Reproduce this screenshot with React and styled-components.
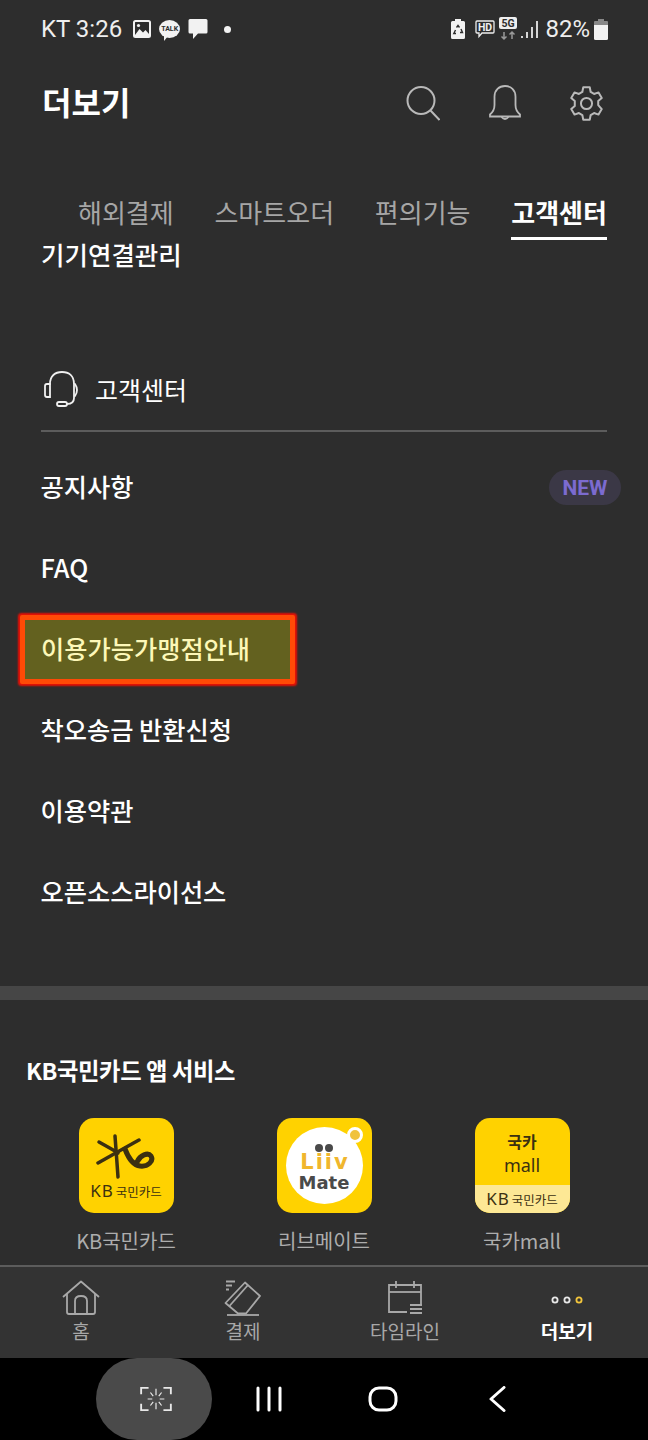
import React from "react";
import styled, { createGlobalStyle } from "styled-components";

const tabs = [
  { label: "해외결제" },
  { label: "스마트오더" },
  { label: "편의기능" },
  { label: "고객센터", active: true },
];

const rows = [
  { label: "공지사항", isNew: true },
  { label: "FAQ" },
  { label: "이용가능가맹점안내", marked: true },
  { label: "착오송금 반환신청" },
  { label: "이용약관" },
  { label: "오픈소스라이선스" },
];

export default function App() {
  return (
    <>
      <GlobalStyle />
      <Page>
        <StatusBar>
          <StatusLeft>
            <ClockText>KT 3:26</ClockText>
            <PictureIcon />
            <TalkBubble>TALK</TalkBubble>
            <MessageIcon />
            <Dot />
          </StatusLeft>
          <StatusRight>
            <BatterySaverIcon />
            <HdIcon />
            <FiveGIcon />
            <SignalIcon />
            <PercentText>82%</PercentText>
            <BatteryIcon />
          </StatusRight>
        </StatusBar>

        <Header>
          <Title>더보기</Title>
          <HeaderIcons>
            <SearchIcon />
            <BellIcon />
            <GearIcon />
          </HeaderIcons>
        </Header>

        <Tabs>
          {tabs.map((tab) => (
            <Tab key={tab.label} $active={tab.active}>
              {tab.label}
            </Tab>
          ))}
        </Tabs>

        <DeviceLabel>기기연결관리</DeviceLabel>

        <SectionHead>
          <HeadsetIcon />
          <SectionTitle>고객센터</SectionTitle>
        </SectionHead>

        <List>
          {rows.map((row) => (
            <Row key={row.label}>
              <RowLabel $marked={row.marked}>{row.label}</RowLabel>
              {row.isNew && <NewBadge>NEW</NewBadge>}
            </Row>
          ))}
        </List>

        <Band />

        <Apps>
          <AppsTitle>KB국민카드 앱 서비스</AppsTitle>
          <AppGrid>
            <AppItem>
              <AppIcon>
                <KbMark />
                <KbLine>
                  KB<small>국민카드</small>
                </KbLine>
              </AppIcon>
              <AppName>KB국민카드</AppName>
            </AppItem>
            <AppItem>
              <AppIcon>
                <LiivCircle>
                  <LiivDots>
                    <i />
                    <i />
                  </LiivDots>
                  <LiivWord>Liiv</LiivWord>
                  <MateWord>Mate</MateWord>
                </LiivCircle>
                <LiivRing />
              </AppIcon>
              <AppName>리브메이트</AppName>
            </AppItem>
            <AppItem>
              <AppIcon>
                <MallTop>
                  <b>국카</b>
                  <span>mall</span>
                </MallTop>
                <MallBand>
                  KB<small>국민카드</small>
                </MallBand>
              </AppIcon>
              <AppName>국카mall</AppName>
            </AppItem>
          </AppGrid>
        </Apps>

        <BottomNav>
          <NavItem>
            <HomeIcon />
            <span>홈</span>
          </NavItem>
          <NavItem>
            <PayIcon />
            <span>결제</span>
          </NavItem>
          <NavItem>
            <CalendarIcon />
            <span>타임라인</span>
          </NavItem>
          <NavItem $active>
            <MoreIcon />
            <span>더보기</span>
          </NavItem>
        </BottomNav>

        <SystemBar>
          <ScanPill>
            <ScanIcon />
          </ScanPill>
          <RecentsIcon />
          <HomeKeyIcon />
          <BackIcon />
        </SystemBar>
      </Page>
    </>
  );
}

const PictureIcon = () => (
  <svg width="18" height="18" viewBox="0 0 18 18">
    <rect x="1" y="1" width="16" height="16" rx="1.5" fill="none" stroke="#f2f2f2" strokeWidth="2" />
    <path d="M2 15 L6.500 9 L10 12.500 L12.500 10 L16 14 V16 H2 Z" fill="#f2f2f2" />
    <circle cx="5.500" cy="5.500" r="1.600" fill="#f2f2f2" />
  </svg>
);

const MessageIcon = () => (
  <svg width="20" height="22" viewBox="0 0 20 22">
    <path d="M2 1 H18 Q19.500 1 19.500 2.500 V14 Q19.500 15.500 18 15.500 H10 L5 21 V15.500 H2 Q0.500 15.500 0.500 14 V2.500 Q0.500 1 2 1 Z" fill="#f2f2f2" />
  </svg>
);

const BatterySaverIcon = () => (
  <svg width="14" height="20" viewBox="0 0 14 20">
    <path d="M4 0 H10 V2 H12.500 Q14 2 14 3.500 V18.500 Q14 20 12.500 20 H1.500 Q0 20 0 18.500 V3.500 Q0 2 1.500 2 H4 Z" fill="#f2f2f2" />
    <path d="M5.500 8.500 L7 6.500 L8.500 8.500 M10 10 L11.500 13.500 H9 M5 14.500 H2.800 L4.500 11" fill="none" stroke="#2d2d2d" strokeWidth="1.400" />
  </svg>
);

const HdIcon = () => (
  <svg width="20" height="20" viewBox="0 0 20 20">
    <path d="M2 2 H18 Q19 2 19 3 V13 Q19 14 18 14 H7 L4 17.500 V14 H2 Q1 14 1 13 V3 Q1 2 2 2 Z" fill="none" stroke="#eee" strokeWidth="1.300" />
    <text x="10" y="12" textAnchor="middle" fontSize="10.500" fontWeight="700" fontFamily="Roboto, sans-serif" fill="#eee">HD</text>
  </svg>
);

const FiveGIcon = () => (
  <svg width="18" height="24" viewBox="0 0 18 24">
    <rect x="0" y="0" width="18" height="12" rx="2" fill="#eee" />
    <text x="9" y="10" textAnchor="middle" fontSize="10.500" fontWeight="700" fontFamily="Roboto, sans-serif" fill="#2d2d2d">5G</text>
    <path d="M5 15 V22 M2.500 19.500 L5 22 L7.500 19.500" fill="none" stroke="#999" strokeWidth="1.500" />
    <path d="M13 22 V15 M10.500 17.500 L13 15 L15.500 17.500" fill="none" stroke="#999" strokeWidth="1.500" />
  </svg>
);

const SignalIcon = () => (
  <svg width="17" height="20" viewBox="0 0 17 20">
    <path d="M1 17 V19 M6 13 V19 M11 8 V19 M16 2 V19" stroke="#e8e8e8" strokeWidth="1.800" fill="none" />
  </svg>
);

const BatteryIcon = () => (
  <svg width="14" height="21" viewBox="0 0 14 21">
    <rect x="4" y="0" width="6" height="3" fill="#888" />
    <rect x="0" y="2" width="14" height="5" rx="1" fill="#888" />
    <path d="M0 6 H14 V19.500 Q14 21 12.500 21 H1.500 Q0 21 0 19.500 Z" fill="#f2f2f2" />
  </svg>
);

const SearchIcon = () => (
  <svg width="34" height="36" viewBox="0 0 34 36" fill="none" stroke="#b9b9b9" strokeWidth="2">
    <circle cx="15" cy="15.500" r="13.500" />
    <path d="M24.500 25.500 L33.500 35" />
  </svg>
);

const BellIcon = () => (
  <svg width="34" height="36" viewBox="0 0 34 36" fill="none" stroke="#b9b9b9" strokeWidth="1.800">
    <path d="M2 29.500 C5 27 6.500 25 6.500 20 V11.500 C6.500 5 11 1 17 1 C23 1 27.500 5 27.500 11.500 V20 C27.500 25 29 27 32 29.500 V31.500 H2 Z" />
    <path d="M13.500 32 Q17 36 20.500 32" />
  </svg>
);

const GearIcon = () => (
  <svg width="37" height="37" viewBox="0 0 24 24" fill="none" stroke="#b9b9b9" strokeWidth="1.300" strokeLinejoin="round">
    <path d="M9.900 1.500 H14.100 L14.700 4.500 L16.900 5.800 L19.800 4.800 L21.900 8.400 L19.600 10.400 V13 L21.900 15.600 L19.800 19.200 L16.900 18.200 L14.700 19.500 L14.100 22.500 H9.900 L9.300 19.500 L7.100 18.200 L4.200 19.200 L2.100 15.600 L4.400 13.600 V10.400 L2.100 8.400 L4.200 4.800 L7.100 5.800 L9.300 4.500 Z" />
    <circle cx="12" cy="12" r="3.600" />
  </svg>
);

const HeadsetIcon = () => (
  <svg width="36" height="36" viewBox="0 0 36 36" fill="none" stroke="#f0f0f0" strokeWidth="1.800" strokeLinecap="round">
    <path d="M6 13 C6 5 11 1 18 1 C25 1 30 5 30 13 V27 C30 31 27 33 23 33" />
    <path d="M6 13 V26 H3 Q1 26 1 24 V15 Q1 13 3 13 H6" />
    <path d="M31 13 Q35 19 31 25" />
    <rect x="13" y="31" width="10" height="4" rx="2" />
  </svg>
);

const KbSvg = styled.svg`
  margin-top: 5px;
`;

const KbMark = () => (
  <KbSvg width="60" height="46" viewBox="0 0 60 46" fill="none" stroke="#3b3011" strokeWidth="3.500" strokeLinecap="round">
    <path d="M19 2 C20 14 21 30 22 43" />
    <path d="M3 8 C10 12 16 15 22 19" />
    <path d="M2 29 C18 20 32 12 43 6" />
    <path d="M29 15 C32 23 36 31 44 32 C52 33 58 27 55 22 C52 18 44 21 41 28" strokeWidth="5" />
  </KbSvg>
);

const HomeIcon = () => (
  <svg width="38" height="36" viewBox="0 0 38 36" fill="none" stroke="#a8a8a8" strokeWidth="1.800" strokeLinejoin="round">
    <path d="M1 17 L19 1.500 L37 17" />
    <path d="M5 14 V32 Q5 34 7 34 H31 Q33 34 33 32 V14" />
    <path d="M13 34 V21 Q13 16 19 16 Q25 16 25 21 V34" />
  </svg>
);

const PayIcon = () => (
  <svg width="38" height="36" viewBox="0 0 38 36" fill="none" stroke="#a8a8a8" strokeWidth="1.800" strokeLinejoin="round">
    <path d="M2 1.500 H11 M2 5.500 H8 M2 9.500 H5" />
    <path d="M21 2.500 L36 16 L22 33.500 H14 L1.500 23 Z" />
    <path d="M5 26.500 L24 5" />
    <path d="M3 35 H35" />
  </svg>
);

const CalendarIcon = () => (
  <svg width="36" height="36" viewBox="0 0 36 36" fill="none" stroke="#a8a8a8" strokeWidth="1.800">
    <path d="M20 32 H2 V5 H34 V25" />
    <path d="M2 12 H34" />
    <path d="M9 1 V8 M27 1 V8" />
    <path d="M23 25 H35 M23 29 H35 M23 33 H35" />
  </svg>
);

const MoreIcon = () => (
  <svg width="36" height="36" viewBox="0 0 36 36" fill="none" strokeWidth="1.800">
    <circle cx="6" cy="20" r="2.600" stroke="#e8e8e8" />
    <circle cx="18" cy="20" r="2.600" stroke="#e8e8e8" />
    <circle cx="30" cy="20" r="2.600" stroke="#f2c53c" />
  </svg>
);

const ScanIcon = () => (
  <svg width="32" height="26" viewBox="0 0 34 28" fill="none" stroke="#e8e8e8" strokeWidth="2">
    <path d="M9 2 H1 V9 M25 2 H33 V9 M9 26 H1 V19 M25 26 H33 V19" />
    <path d="M17 3 V10 M17 18 V25 M8 14 H13 M21 14 H26 M11 7 L14 11 M23 7 L20 11 M11 21 L14 17 M23 21 L20 17" strokeWidth="1.300" />
  </svg>
);

const RecentsIcon = () => (
  <svg width="30" height="26" viewBox="0 0 30 26" fill="none" stroke="#fff" strokeWidth="3" strokeLinecap="round">
    <path d="M4 2 V24 M15 2 V24 M26 2 V24" />
  </svg>
);

const HomeKeyIcon = () => (
  <svg width="30" height="26" viewBox="0 0 30 26" fill="none" stroke="#fff" strokeWidth="3">
    <rect x="2" y="2" width="26" height="22" rx="9" />
  </svg>
);

const BackIcon = () => (
  <svg width="30" height="26" viewBox="0 0 30 26" fill="none" stroke="#fff" strokeWidth="3" strokeLinecap="round" strokeLinejoin="round">
    <path d="M22 1.500 L9 13 L22 24.500" />
  </svg>
);

const GlobalStyle = createGlobalStyle`
  html, body {
    margin: 0;
    padding: 0;
    background: #2d2d2d;
  }
  * {
    box-sizing: border-box;
  }
`;

const Page = styled.div`
  width: 648px;
  height: 1440px;
  overflow: hidden;
  display: flex;
  flex-direction: column;
  background: #2d2d2d;
  color: #fff;
  font-family: "Noto Sans CJK KR", "Noto Sans", sans-serif;
`;

const StatusBar = styled.div`
  height: 58px;
  padding: 0 40px 0 41px;
  display: flex;
  align-items: center;
  justify-content: space-between;
`;

const StatusLeft = styled.div`
  display: flex;
  align-items: center;
  gap: 8px;
`;

const StatusRight = styled.div`
  display: flex;
  align-items: center;
  gap: 4px;

  svg:nth-child(2) {
    margin-left: 6px;
  }
`;

const ClockText = styled.span`
  margin-right: 3px;
  font-family: Roboto, sans-serif;
  font-size: 24px;
  color: #eeeeee;
  line-height: 1;
`;

const PercentText = styled(ClockText)`
  margin: 0 0 0 3px;
`;

const TalkBubble = styled.span`
  position: relative;
  width: 21px;
  height: 18px;
  border-radius: 50%;
  background: #f2f2f2;
  color: #2d2d2d;
  font-family: Roboto, sans-serif;
  font-size: 7px;
  font-weight: 700;
  display: flex;
  align-items: center;
  justify-content: center;

  &::after {
    content: "";
    position: absolute;
    left: 5px;
    bottom: -3px;
    border-top: 5px solid #f2f2f2;
    border-right: 4px solid transparent;
  }
`;

const Dot = styled.span`
  width: 7px;
  height: 7px;
  margin-left: 8px;
  border-radius: 50%;
  background: #f2f2f2;
`;

const Header = styled.header`
  height: 90px;
  padding: 0 43px 0 42px;
  display: flex;
  align-items: center;
  justify-content: space-between;
`;

const Title = styled.h1`
  margin: 0 0 4px;
  font-size: 32px;
  font-weight: 700;
  line-height: 1;
`;

const HeaderIcons = styled.div`
  display: flex;
  align-items: center;
  gap: 46px;

  svg:first-child {
    margin-right: 2px;
  }
`;

const Tabs = styled.nav`
  height: 92px;
  padding: 0 41px 0 78px;
  display: flex;
  align-items: flex-end;
  justify-content: space-between;
`;

const Tab = styled.div`
  height: 50px;
  font-size: 26px;
  line-height: 44px;
  font-weight: ${(p) => (p.$active ? 700 : 400)};
  color: ${(p) => (p.$active ? "#fff" : "#a6a6a6")};
  border-bottom: 3px solid ${(p) => (p.$active ? "#fff" : "transparent")};
`;

const DeviceLabel = styled.div`
  height: 30px;
  padding-left: 41px;
  font-size: 25.5px;
  line-height: 28px;
  font-weight: 500;
`;

const SectionHead = styled.div`
  height: 162px;
  margin: 0 41px;
  padding: 0 0 20px 3px;
  display: flex;
  align-items: flex-end;
  gap: 15px;
  border-bottom: 2px solid #5c5c5c;

  svg {
    margin-bottom: 3px;
  }
`;

const SectionTitle = styled.div`
  font-size: 25px;
  line-height: 42px;
  font-weight: 400;
`;

const List = styled.div`
  margin-top: 15px;
`;

const Row = styled.div`
  height: 81px;
  padding: 0 27px 0 40.5px;
  display: flex;
  align-items: center;
  justify-content: space-between;
`;

const RowLabel = styled.div`
  font-size: 25.25px;
  font-weight: 500;
  padding-bottom: 4px;
  ${(p) =>
    p.$marked &&
    `
    width: 275px;
    height: 69px;
    margin-left: -20.5px;
    padding-left: 16px;
    display: flex;
    align-items: center;
    color: #fdf8b8;
    background: #63611f;
    border: 5px solid #ff4a06;
    border-radius: 2px;
    box-shadow: 0 0 2px 1.5px #e81005;
  `}
`;

const NewBadge = styled.span`
  width: 72px;
  height: 35px;
  border-radius: 18px;
  background: #3b3846;
  color: #7c6bd0;
  font-family: Roboto, sans-serif;
  font-size: 21px;
  font-weight: 700;
  display: flex;
  align-items: center;
  justify-content: center;
`;

const Band = styled.div`
  height: 14px;
  margin-top: 53px;
  background: #464646;
`;

const Apps = styled.section`
  flex: 1;
  min-height: 0;
  padding: 53px 27px 0;
`;

const AppsTitle = styled.h2`
  margin: 0 0 31px -1px;
  font-size: 23.3px;
  line-height: 34px;
  font-weight: 700;
  letter-spacing: -0.4px;
`;

const AppGrid = styled.div`
  display: grid;
  grid-template-columns: repeat(3, 198px);
`;

const AppItem = styled.div`
  display: flex;
  flex-direction: column;
  align-items: center;
`;

const AppIcon = styled.div`
  position: relative;
  width: 95px;
  height: 95px;
  border-radius: 15px;
  overflow: hidden;
  background: #ffd200;
  color: #3b3011;
  display: flex;
  flex-direction: column;
  align-items: center;
  justify-content: center;
`;

const AppName = styled.div`
  margin-top: 13px;
  font-size: 20px;
  line-height: 30px;
  color: #adadad;
`;

const KbLine = styled.div`
  margin-top: 1px;
  font-family: "Noto Sans", sans-serif;
  font-size: 17px;
  line-height: 20px;
  letter-spacing: 1px;
  white-space: nowrap;

  small {
    margin-left: 2px;
    font-family: "Noto Sans CJK KR", sans-serif;
    font-size: 12.5px;
    letter-spacing: 0;
  }
`;

const LiivCircle = styled.div`
  width: 77px;
  height: 77px;
  border-radius: 50%;
  background: #fff;
  display: flex;
  flex-direction: column;
  align-items: center;
  justify-content: center;
  padding-top: 5px;
`;

const LiivDots = styled.div`
  display: flex;
  gap: 2px;

  i {
    width: 8px;
    height: 8px;
    border-radius: 50%;
    background: #4a4a4a;
  }
`;

const LiivWord = styled.div`
  font-family: "DejaVu Sans", sans-serif;
  font-size: 21px;
  line-height: 20px;
  font-weight: 700;
  letter-spacing: 2px;
  margin-right: -2px;
  color: #f0b62d;
`;

const MateWord = styled.div`
  font-family: "DejaVu Sans", sans-serif;
  font-size: 18px;
  line-height: 21px;
  font-weight: 700;
  color: #4a4a4a;
`;

const LiivRing = styled.span`
  position: absolute;
  top: 9px;
  right: 9px;
  width: 16px;
  height: 16px;
  border-radius: 50%;
  border: 3px solid #fff;
  background: #f0c23c;
`;

const MallTop = styled.div`
  flex: 1;
  display: flex;
  flex-direction: column;
  align-items: center;
  justify-content: center;
  padding-top: 2px;

  b {
    margin-bottom: 2px;
    font-size: 16px;
    line-height: 22px;
    font-weight: 700;
  }

  span {
    font-family: "Noto Sans", sans-serif;
    font-size: 18px;
    line-height: 22px;
  }
`;

const MallBand = styled.div`
  width: 100%;
  height: 28px;
  background: #fde895;
  font-family: "Noto Sans", sans-serif;
  font-size: 17px;
  line-height: 28px;
  letter-spacing: 1px;
  text-align: center;
  white-space: nowrap;

  small {
    margin-left: 2px;
    font-family: "Noto Sans CJK KR", sans-serif;
    font-size: 12.5px;
    letter-spacing: 0;
  }
`;

const BottomNav = styled.nav`
  height: 93px;
  border-top: 2px solid #5c5c5c;
  background: #333333;
  display: grid;
  grid-template-columns: repeat(4, 1fr);
`;

const NavItem = styled.div`
  padding-top: 13px;
  display: flex;
  flex-direction: column;
  align-items: center;
  color: ${(p) => (p.$active ? "#fff" : "#a8a8a8")};
  font-size: 19px;
  font-weight: ${(p) => (p.$active ? 700 : 400)};

  span {
    margin-top: 1px;
    line-height: 28px;
  }
`;

const SystemBar = styled.div`
  height: 82px;
  flex: none;
  padding-left: 96px;
  background: #000;
  display: flex;
  align-items: center;
  gap: 84px;
`;

const ScanPill = styled.div`
  width: 116px;
  height: 82px;
  margin-right: -42px;
  padding-left: 3px;
  border-radius: 41px;
  background: #4a4a4a;
  display: flex;
  align-items: center;
  justify-content: center;
`;
